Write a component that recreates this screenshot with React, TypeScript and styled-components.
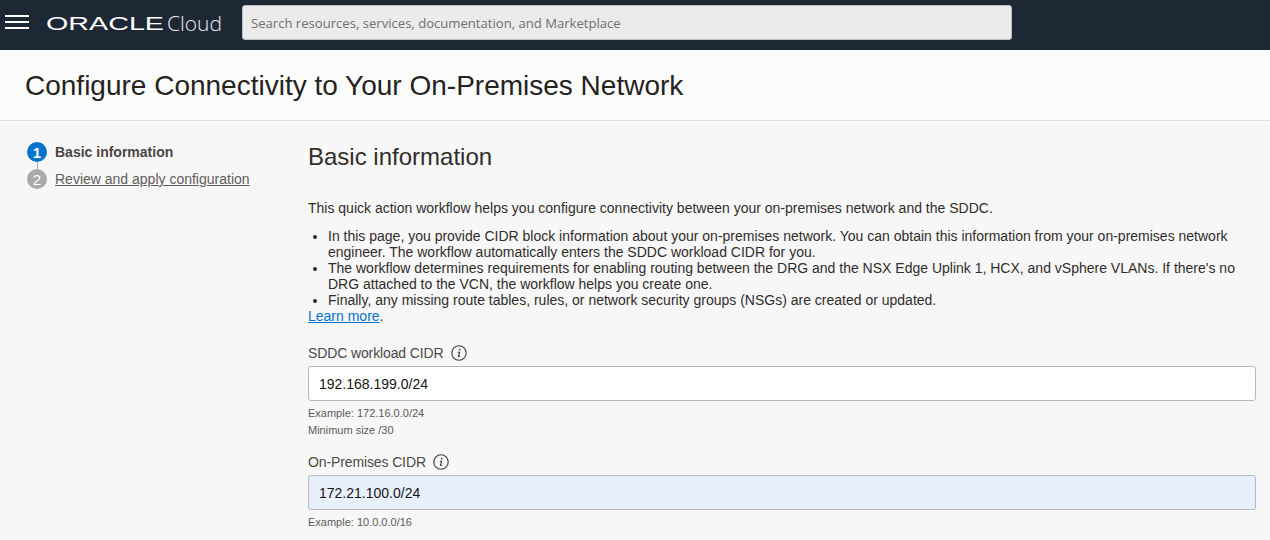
import React from 'react'
import styled, { createGlobalStyle } from 'styled-components'

const GlobalStyle = createGlobalStyle`
  html, body {
    margin: 0;
    height: 540px;
    overflow: hidden;
    background: #f7f7f7;
    font-family: 'Liberation Sans', Arial, sans-serif;
    color: #312d2a;
  }
  * { box-sizing: border-box; }
`

const Header = styled.header`
  height: 50px;
  background: #1e2835;
  display: flex;
  align-items: flex-start;
  padding: 5px 0 0 5px;
`

const MenuIcon = styled.svg`
  width: 24px;
  height: 16px;
  margin-top: 9px;
  flex: none;
`

const Brand = styled.div`
  display: flex;
  align-items: center;
  height: 35px;
  width: 196px;
  margin-left: 17px;
  color: #fff;
  flex: none;
`

const BrandMark = styled.span`
  display: inline-block;
  width: 121px;
  padding-top: 2px;
  font-family: 'Liberation Sans', sans-serif;
  font-size: 19px;
  white-space: nowrap;
  transform-origin: left center;
  transform: scaleX(1.51);
`

const BrandCloud = styled.span`
  font-family: 'Open Sans', sans-serif;
  font-size: 21px;
  font-weight: 300;
  color: #e6e8ea;
`

const SearchBox = styled.div`
  width: 770px;
  height: 35px;
  padding-left: 8px;
  display: flex;
  align-items: center;
  background: #ebebeb;
  border: 1px solid #b9bdc4;
  border-radius: 3px;
  color: #6f6f6f;
  font-family: 'Open Sans', sans-serif;
  font-size: 13.1px;
`

const TitleBar = styled.div`
  height: 71px;
  padding: 1px 25px 0;
  display: flex;
  align-items: center;
  background: #fcfcfc;
  border-bottom: 1px solid #e3e3e3;
`

const Title = styled.h1`
  margin: 0;
  font-size: 28px;
  font-weight: 400;
  color: #252220;
`

const Body = styled.div`
  display: flex;
`

const Steps = styled.ol`
  list-style: none;
  width: 308px;
  margin: 0;
  padding: 21px 0 0 27px;
  flex: none;
`

const Step = styled.li`
  position: relative;
  display: flex;
  align-items: center;
  gap: 8px;
  height: 20px;
  margin-bottom: 7px;
  font-size: 14px;

  & + &::before {
    content: '';
    position: absolute;
    left: 10px;
    top: -7px;
    width: 1px;
    height: 7px;
    background: #a8a8a8;
  }
`

const StepNumber = styled.span<{ $active?: boolean }>`
  width: 20px;
  height: 20px;
  flex: none;
  border-radius: 50%;
  display: flex;
  align-items: center;
  justify-content: center;
  color: #fff;
  font-size: 15px;
  font-weight: ${props => (props.$active ? 700 : 400)};
  background: ${props => (props.$active ? '#0572ce' : '#aaaaaa')};
`

const StepCurrent = styled.strong`
  color: #4a4542;
`

const StepLink = styled.a`
  color: #625d5a;
  text-decoration: underline;
`

const Main = styled.main`
  flex: 1;
  padding: 0 14px 0 0;
`

const Heading = styled.h2`
  margin: 22px 0 0;
  font-size: 24px;
  line-height: 28px;
  font-weight: 400;
  color: #312d2a;
`

const Intro = styled.p`
  margin: 29px 0 0;
  font-size: 14px;
  line-height: 16px;
  color: #312d2a;
`

const Notes = styled.ul`
  margin: 12px 0 0;
  padding-left: 20px;
  font-size: 14px;
  line-height: 16px;
  color: #312d2a;
`

const LearnMore = styled.div`
  font-size: 14px;
  line-height: 16px;

  a {
    color: #0572ce;
    text-decoration: underline;
  }
`

const Field = styled.div<{ $top: number }>`
  margin-top: ${props => props.$top}px;
`

const Label = styled.label`
  display: flex;
  align-items: center;
  gap: 7px;
  height: 20px;
  font-size: 14px;
  letter-spacing: -0.12px;
  color: #4f4a47;
`

const InfoIcon = styled.svg`
  width: 16px;
  height: 16px;
  flex: none;
`

const Input = styled.div<{ $filled?: boolean }>`
  height: 35px;
  margin-top: 3px;
  padding-left: 10px;
  display: flex;
  align-items: center;
  font-size: 14px;
  color: #161513;
  background: ${props => (props.$filled ? '#e8f0fe' : '#fff')};
  border: 1px solid #b5b8bd;
  border-radius: 3px;
`

const Hint = styled.div`
  margin-top: 4px;
  font-size: 11px;
  line-height: 17px;
  color: #5f5a57;

  & + & {
    margin-top: 0;
  }
`

const Info = () => (
  <InfoIcon viewBox="0 0 16 16" fill="none">
    <circle cx="8" cy="8" r="7.2" stroke="#3f3a37" strokeWidth="1.1" />
    <circle cx="8.7" cy="4.6" r="0.9" fill="#3f3a37" />
    <path d="M6.8 7.3h1.8L7.5 11.1c-.1.6.7.6 1.5-.1" stroke="#3f3a37" strokeWidth="1.1" />
  </InfoIcon>
)

export default function App() {
  return (
    <>
      <GlobalStyle />
      <Header>
        <MenuIcon viewBox="0 0 24 16">
          <path d="M0 2h24M0 8h24M0 14h24" stroke="#fff" strokeWidth="2" />
        </MenuIcon>
        <Brand>
          <BrandMark>ORACLE</BrandMark>
          <BrandCloud>Cloud</BrandCloud>
        </Brand>
        <SearchBox>Search resources, services, documentation, and Marketplace</SearchBox>
      </Header>
      <TitleBar>
        <Title>Configure Connectivity to Your On-Premises Network</Title>
      </TitleBar>
      <Body>
        <Steps>
          <Step>
            <StepNumber $active>1</StepNumber>
            <StepCurrent>Basic information</StepCurrent>
          </Step>
          <Step>
            <StepNumber>2</StepNumber>
            <StepLink>Review and apply configuration</StepLink>
          </Step>
        </Steps>
        <Main>
          <Heading>Basic information</Heading>
          <Intro>
            This quick action workflow helps you configure connectivity between your on-premises network and the SDDC.
          </Intro>
          <Notes>
            <li>
              In this page, you provide CIDR block information about your on-premises network. You can obtain this
              information from your on-premises network engineer. The workflow automatically enters the SDDC workload
              CIDR for you.
            </li>
            <li>
              The workflow determines requirements for enabling routing between the DRG and the NSX Edge Uplink 1, HCX,
              and vSphere VLANs. If there's no DRG attached to the VCN, the workflow helps you create one.
            </li>
            <li>Finally, any missing route tables, rules, or network security groups (NSGs) are created or updated.</li>
          </Notes>
          <LearnMore>
            <a>Learn more</a>.
          </LearnMore>
          <Field $top={19}>
            <Label>
              SDDC workload CIDR
              <Info />
            </Label>
            <Input>192.168.199.0/24</Input>
            <Hint>Example: 172.16.0.0/24</Hint>
            <Hint>Minimum size /30</Hint>
          </Field>
          <Field $top={13}>
            <Label>
              On-Premises CIDR
              <Info />
            </Label>
            <Input $filled>172.21.100.0/24</Input>
            <Hint>Example: 10.0.0.0/16</Hint>
          </Field>
        </Main>
      </Body>
    </>
  )
}
